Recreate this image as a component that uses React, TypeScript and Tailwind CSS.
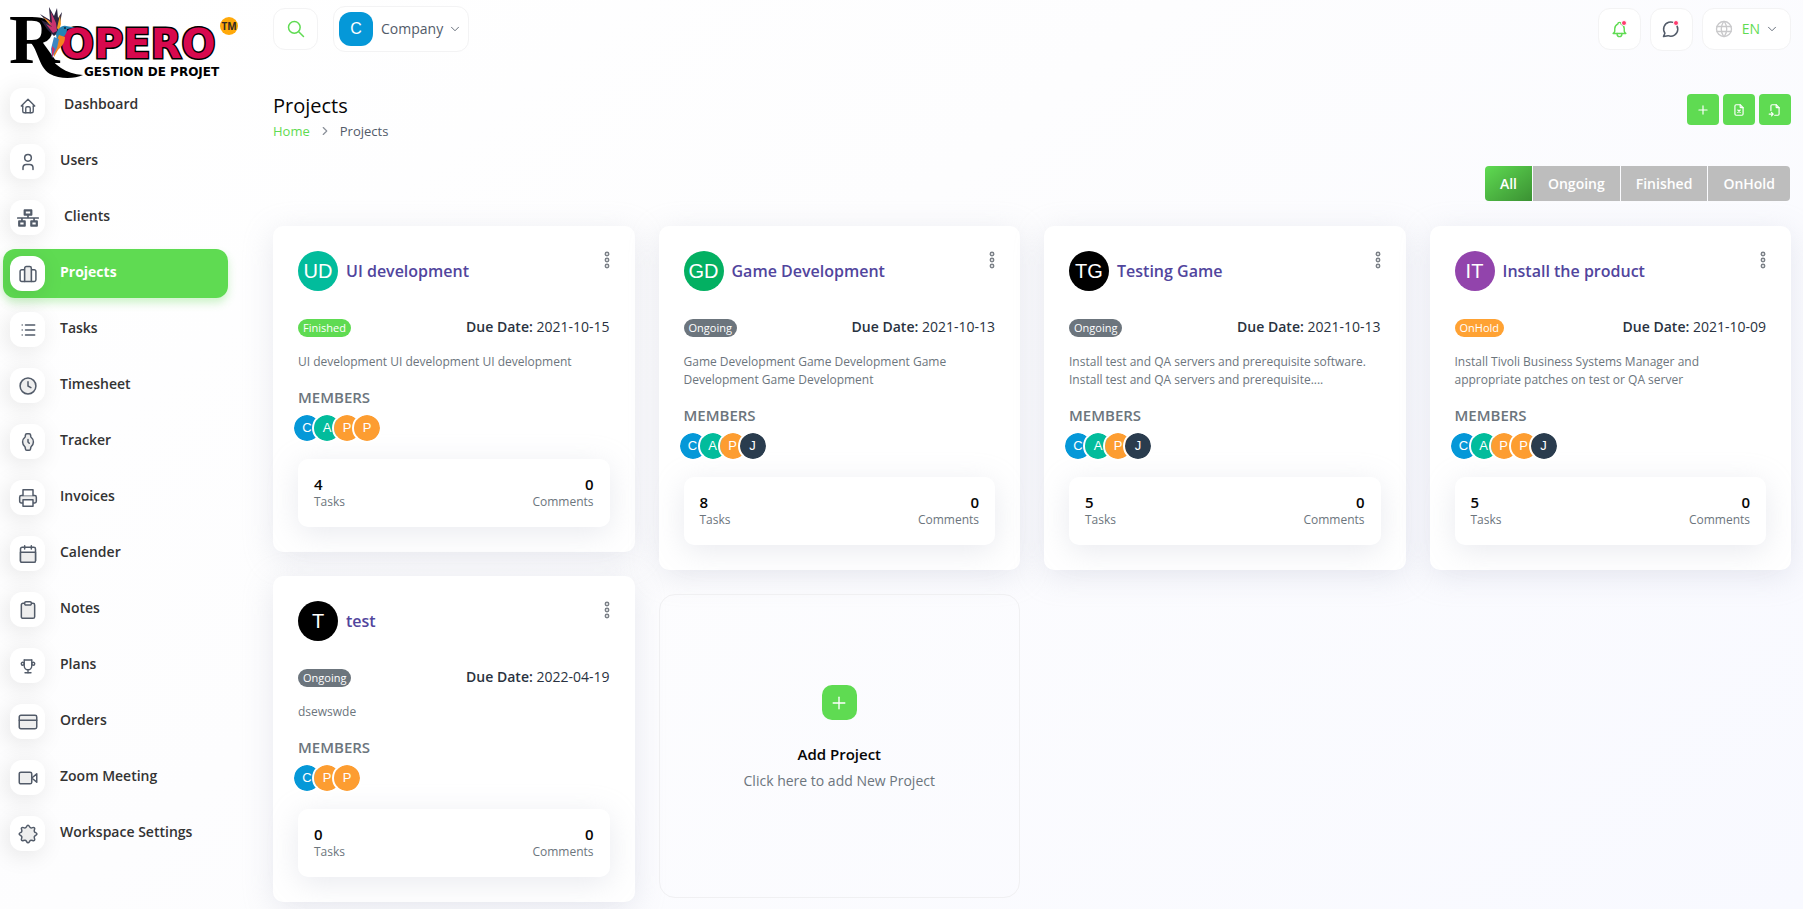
import type { ReactNode } from "react";
import { FaNetworkWired } from "react-icons/fa";
import {
  TbBell,
  TbChevronDown,
  TbChevronRight,
  TbFileImport,
  TbFileX,
  TbHome,
  TbList,
  TbPlus,
  TbSearch,
  TbTrophy,
  TbUser,
  TbWorld,
} from "react-icons/tb";

type Status = "Finished" | "Ongoing" | "OnHold";
type Member = "C" | "A" | "P" | "J";

interface Project {
  name: string;
  initials: string;
  avatarClass: string;
  status: Status;
  dueDate: string;
  description: string;
  members: Member[];
  tasks: number;
  comments: number;
}

const STATUS_CLASS: Record<Status, string> = {
  Finished: "bg-[#5fdb52]",
  Ongoing: "bg-[#6c757d]",
  OnHold: "bg-[#ffa233]",
};

const MEMBER_CLASS: Record<Member, string> = {
  C: "bg-[#0598d8]",
  A: "bg-[#02bc9c]",
  P: "bg-[#fd9d31]",
  J: "bg-[#2a3c4e]",
};

// One entry per column: cards of unequal height are packed top-down.
const COLUMNS: Project[][] = [
  [
    {
      name: "UI development",
      initials: "UD",
      avatarClass: "bg-[#02bc9c]",
      status: "Finished",
      dueDate: "2021-10-15",
      description: "UI development UI development UI development",
      members: ["C", "A", "P", "P"],
      tasks: 4,
      comments: 0,
    },
    {
      name: "test",
      initials: "T",
      avatarClass: "bg-black",
      status: "Ongoing",
      dueDate: "2022-04-19",
      description: "dsewswde",
      members: ["C", "P", "P"],
      tasks: 0,
      comments: 0,
    },
  ],
  [
    {
      name: "Game Development",
      initials: "GD",
      avatarClass: "bg-[#03b062]",
      status: "Ongoing",
      dueDate: "2021-10-13",
      description: "Game Development Game Development Game Development Game Development",
      members: ["C", "A", "P", "J"],
      tasks: 8,
      comments: 0,
    },
  ],
  [
    {
      name: "Testing Game",
      initials: "TG",
      avatarClass: "bg-black",
      status: "Ongoing",
      dueDate: "2021-10-13",
      description:
        "Install test and QA servers and prerequisite software. Install test and QA servers and prerequisite....",
      members: ["C", "A", "P", "J"],
      tasks: 5,
      comments: 0,
    },
  ],
  [
    {
      name: "Install the product",
      initials: "IT",
      avatarClass: "bg-[#9244ac]",
      status: "OnHold",
      dueDate: "2021-10-09",
      description:
        "Install Tivoli Business Systems Manager and appropriate patches on test or QA server",
      members: ["C", "A", "P", "P", "J"],
      tasks: 5,
      comments: 0,
    },
  ],
];

function DuoIcon({ children }: { children: ReactNode }) {
  return (
    <svg
      viewBox="0 0 24 24"
      className="size-5"
      fill="none"
      stroke="currentColor"
      strokeWidth="1.8"
      strokeLinecap="round"
      strokeLinejoin="round"
      aria-hidden="true"
    >
      {children}
    </svg>
  );
}

const NAV_ITEMS: { label: string; icon: ReactNode; wide?: boolean }[] = [
  { label: "Dashboard", icon: <TbHome size={18} strokeWidth={1.8} />, wide: true },
  { label: "Users", icon: <TbUser size={20} strokeWidth={1.8} /> },
  { label: "Clients", icon: <FaNetworkWired size={22} />, wide: true },
  {
    label: "Projects",
    icon: (
      <DuoIcon>
        <path d="M8 21H4.500a2 2 0 0 1-2-2V9a2 2 0 0 1 2-2H8zM16 21h3.500a2 2 0 0 0 2-2V9a2 2 0 0 0-2-2H16z" />
        <path d="M8 21V5a2 2 0 0 1 2-2h4a2 2 0 0 1 2 2v16z" fill="#eeeeee" />
      </DuoIcon>
    ),
  },
  { label: "Tasks", icon: <TbList size={20} strokeWidth={1.8} /> },
  {
    label: "Timesheet",
    icon: (
      <DuoIcon>
        <circle cx="12" cy="12" r="9.500" fill="#eeeeee" />
        <path d="M12 7v5l3.500 2" />
      </DuoIcon>
    ),
  },
  {
    label: "Tracker",
    icon: (
      <DuoIcon>
        <path
          d="M8.500 6 9 3.500A1.500 1.500 0 0 1 10.500 2h3A1.500 1.500 0 0 1 15 3.500l.5 2.500Q18.500 8.500 18.500 12t-3 6l-.5 2.500a1.500 1.500 0 0 1-1.500 1.500h-3A1.500 1.500 0 0 1 9 20.500L8.500 18q-3-2.500-3-6t3-6z"
          fill="#eeeeee"
        />
        <path d="M12 9v3l1.500 1.500" />
      </DuoIcon>
    ),
  },
  {
    label: "Invoices",
    icon: (
      <DuoIcon>
        <path d="M6 18H4a2 2 0 0 1-2-2v-5a2 2 0 0 1 2-2h16a2 2 0 0 1 2 2v5a2 2 0 0 1-2 2h-2" fill="#eeeeee" />
        <path d="M6 9V2h12v7" fill="#ffffff" />
        <path d="M6 14h12v8H6z" fill="#ffffff" />
      </DuoIcon>
    ),
  },
  {
    label: "Calender",
    icon: (
      <DuoIcon>
        <rect x="3" y="4" width="18" height="18" rx="2" />
        <path d="M3 10h18v10a2 2 0 0 1-2 2H5a2 2 0 0 1-2-2zM16 2v4M8 2v4" fill="#eeeeee" />
      </DuoIcon>
    ),
  },
  {
    label: "Notes",
    icon: (
      <DuoIcon>
        <rect x="4" y="4" width="16" height="18" rx="2" fill="#eeeeee" />
        <rect x="8" y="2" width="8" height="4" rx="1.500" fill="#ffffff" />
      </DuoIcon>
    ),
  },
  { label: "Plans", icon: <TbTrophy size={18} strokeWidth={1.8} /> },
  {
    label: "Orders",
    icon: (
      <DuoIcon>
        <rect x="1.500" y="4" width="21" height="16" rx="2" fill="#eeeeee" />
        <path d="M1.500 10h21" />
      </DuoIcon>
    ),
  },
  {
    label: "Zoom Meeting",
    icon: (
      <DuoIcon>
        <rect x="1.500" y="5" width="15" height="14" rx="2" fill="#eeeeee" />
        <path d="m22.500 7-6 5 6 5z" />
      </DuoIcon>
    ),
  },
  {
    label: "Workspace Settings",
    icon: (
      <DuoIcon>
        <path
          d="M12 1.500c1.800 0 1.600 2.600 3.300 3.100 1.600.7 3.200-1.400 4.400-.1 1.300 1.200-.8 2.800-.1 4.400.5 1.700 3.100 1.400 3.100 3.100s-2.600 1.500-3.100 3.200c-.7 1.600 1.400 3.200.1 4.400-1.200 1.300-2.800-.8-4.400-.1-1.700.5-1.500 3.100-3.300 3.100s-1.500-2.600-3.200-3.100c-1.600-.7-3.200 1.400-4.400.1-1.300-1.200.8-2.800.1-4.400C4 13.500 1.400 13.700 1.400 12s2.600-1.400 3.100-3.100c.7-1.600-1.400-3.200-.1-4.400 1.200-1.300 2.800.8 4.400.1C10.500 4.100 10.200 1.500 12 1.500z"
          fill="#eeeeee"
        />
      </DuoIcon>
    ),
  },
];

function Logo() {
  return (
    <svg viewBox="0 0 250 81" className="h-[81px] w-[250px]" role="img" aria-label="Ropero gestion de projet">
      <text x="9" y="63" fontFamily="'Liberation Serif', serif" fontSize="70" fontWeight="700">
        R
      </text>
      <path d="M28 40c7 1 11 5 17 12 10 13 20 22 38 23-9 4-24 4-33-1-12-7-12-27-22-34z" />
      <text
        x="60"
        y="58"
        fontFamily="'DejaVu Sans', sans-serif"
        fontSize="40"
        fontWeight="700"
        fill="#d8094e"
        stroke="#000000"
        strokeWidth="3"
        paintOrder="stroke"
      >
        OPERO
      </text>
      <text x="84" y="76" fontFamily="'DejaVu Sans', sans-serif" fontSize="12" fontWeight="700">
        GESTION DE PROJET
      </text>
      {/* hummingbird */}
      <path d="M54 36 47 29l-6-9 7 3-8-9 10 6L49 7l5 9 3-8 1 10 4-6-2 12-1 8z" fill="#2b2440" />
      <path d="m53 33-7-9 6 3-7-9 7 5-1-11 5 11 1 8z" fill="#c8336f" />
      <path d="m43 17 6 4 2 5z" fill="#f19a25" />
      <path d="m57 28 3-13 1 9-2 7z" fill="#f19a25" />
      <path d="M56 34c2-5 5-9 10-8l9 1.500-8 1.500c0 6-5 10-10 13z" fill="#2584b5" />
      <path d="m59 35 6 2c0 6-3 9-7 13l-4 7-1-7z" fill="#f5821f" />
      <path d="m54 37 5 2-2 9-5 10-1-9z" fill="#3c86c4" />
      <path d="m52 46 3 3-3 9z" fill="#c8336f" />
      <circle cx="65" cy="28" r="1" fill="#10243a" />
      <circle cx="229" cy="26" r="9" fill="#ffa90a" />
      <text x="229" y="30" textAnchor="middle" fontFamily="'Open Sans', sans-serif" fontSize="10" fontWeight="700" fill="#332a22">
        TM
      </text>
    </svg>
  );
}

function Sidebar() {
  return (
    <aside className="w-[250px] shrink-0">
      <Logo />
      <nav className="flex flex-col gap-[7px] pr-[22px] pl-[3px]">
        {NAV_ITEMS.map(({ label, icon, wide }) => {
          const active = label === "Projects";
          return (
            <a
              key={label}
              href="#"
              className={[
                "flex h-[49px] items-center rounded-xl pl-[7px] text-sm",
                active
                  ? "bg-[#5fdb52] font-bold text-white shadow-[0_5px_8px_rgba(95,219,82,0.3)]"
                  : "font-semibold text-[#333333]",
              ].join(" ")}
            >
              <span className="flex size-[35px] items-center justify-center rounded-xl bg-white text-[#525b69] shadow-[-3px_4px_23px_rgba(0,0,0,0.1)]">
                {icon}
              </span>
              <span className={wide ? "ml-[19px] pb-1" : "ml-[15px] pb-1"}>{label}</span>
            </a>
          );
        })}
      </nav>
    </aside>
  );
}

function TopBar() {
  const box = "flex items-center rounded-xl border border-[#f3f3f4] bg-white";
  return (
    <header className="flex h-[58px] items-center justify-between">
      <div className="flex items-center gap-[15px]">
        <button type="button" aria-label="Search" className={`${box} h-[42px] w-[45px] justify-center text-[#5fdb52]`}>
          <TbSearch size={20} strokeWidth={1.8} />
        </button>
        <button type="button" className={`${box} h-[46px] pr-[6px] pl-[5px] text-sm font-medium text-[#525b69]`}>
          <span className="mr-2 flex size-[34px] items-center justify-center rounded-xl bg-[#0598d8] font-['Liberation_Sans',sans-serif] text-base font-normal text-white">
            C
          </span>
          Company
          <TbChevronDown size={14} strokeWidth={1.5} className="ml-[5px]" />
        </button>
      </div>
      <div className="flex items-center gap-[9px]">
        <button type="button" aria-label="Notifications" className={`${box} relative h-[42px] w-[43px] justify-center text-[#5fdb52]`}>
          <TbBell size={19} strokeWidth={1.8} />
          <span className="absolute top-[11px] right-[13px] size-[6px] rounded-full border border-white bg-[#ff3a6e]" />
        </button>
        <button type="button" aria-label="Messages" className={`${box} relative h-[43px] w-[43px] justify-center text-[#525b69]`}>
          <DuoIcon>
            <path d="M3 21l1.700-4A8.500 8.500 0 1 1 8.500 20z" />
          </DuoIcon>
          <span className="absolute top-[11px] right-[13px] size-[6px] rounded-full border border-white bg-[#ff3a6e]" />
        </button>
        <button type="button" className={`${box} h-[42px] px-[11px] text-sm text-[#5fdb52]`}>
          <TbWorld size={20} strokeWidth={1.6} className="mr-2 text-[#c9c9cb]" />
          EN
          <TbChevronDown size={14} strokeWidth={1.5} className="ml-[5px] text-[#525b69]" />
        </button>
      </div>
    </header>
  );
}

function PageHeader() {
  const action = "flex h-[31px] w-8 items-center justify-center rounded bg-[#5fdb52] text-white";
  return (
    <div className="mt-[33px] flex items-start justify-between">
      <div>
        <h1 className="text-xl leading-[30px] font-medium text-[#060606]">Projects</h1>
        <nav aria-label="Breadcrumb" className="flex items-center text-[13px] leading-5 text-[#525b69]">
          <a href="#" className="text-[#5fdb52]">
            Home
          </a>
          <TbChevronRight size={14} className="mx-2 text-[#8a9099]" />
          <span>Projects</span>
        </nav>
      </div>
      <div className="mt-[3px] flex gap-1">
        <button type="button" aria-label="Add project" className={action}>
          <TbPlus size={14} />
        </button>
        <button type="button" aria-label="Export" className={action}>
          <TbFileX size={14} />
        </button>
        <button type="button" aria-label="Import" className={action}>
          <TbFileImport size={14} />
        </button>
      </div>
    </div>
  );
}

function Filters() {
  return (
    <div className="mt-[25px] flex justify-end pr-px">
      <div className="flex gap-px overflow-hidden rounded text-sm font-semibold text-white">
        <button type="button" className="h-[35px] bg-linear-to-br from-[#5fdb52] to-[#3b9133] px-[15px]">
          All
        </button>
        {["Ongoing", "Finished", "OnHold"].map((label) => (
          <button key={label} type="button" className="h-[35px] bg-[#bdbdbd] px-[15px]">
            {label}
          </button>
        ))}
      </div>
    </div>
  );
}

function ProjectCard({ project }: { project: Project }) {
  return (
    <article className="rounded-[10px] bg-white p-[25px] shadow-[0_6px_30px_rgba(182,186,203,0.3)]">
      <header className="flex items-start justify-between">
        <div className="flex items-center gap-2">
          <span
            className={`flex size-10 items-center justify-center rounded-full font-['Liberation_Sans',sans-serif] text-xl text-white ${project.avatarClass}`}
          >
            {project.initials}
          </span>
          <h2 className="text-base font-semibold text-[#51459d]">
            <a href="#">{project.name}</a>
          </h2>
        </div>
        <button type="button" aria-label="Project menu" className="text-[#7b8087]">
          <svg viewBox="0 0 6 18" className="h-[18px] w-[6px]" fill="none" stroke="currentColor" strokeWidth="1.500">
            <circle cx="3" cy="3" r="1.700" />
            <circle cx="3" cy="9" r="1.700" />
            <circle cx="3" cy="15" r="1.700" />
          </svg>
        </button>
      </header>

      <div className="mt-[25px] flex h-[22px] items-center justify-between">
        <span
          className={`mt-[2px] rounded-full px-[5px] text-[11px] leading-[18px] text-white ${STATUS_CLASS[project.status]}`}
        >
          {project.status}
        </span>
        <p className="text-sm text-[#293240]">
          <strong className="font-semibold">Due Date:</strong> {project.dueDate}
        </p>
      </div>

      <p className="mt-[15px] text-xs leading-[18px] text-[#6c757d]">{project.description}</p>

      <h3 className="mt-4 text-[15px] leading-5 font-semibold text-[#6c757d]">MEMBERS</h3>
      <div className="mt-[6px] -ml-[6px] flex">
        {project.members.map((member, index) => (
          <span
            key={index}
            className={`-mr-[10px] flex size-[30px] items-center justify-center rounded-full border-2 border-white bg-clip-padding font-['Liberation_Sans',sans-serif] text-[13px] text-white ${MEMBER_CLASS[member]}`}
          >
            {member}
          </span>
        ))}
      </div>

      <div className="mt-4 flex justify-between rounded-[10px] bg-white px-4 pt-[15px] pb-[17px] shadow-[0_6px_30px_rgba(182,186,203,0.3)]">
        <div>
          <p className="text-[15px] leading-5 font-semibold text-[#060606]">{project.tasks}</p>
          <p className="text-xs text-[#6c757d]">Tasks</p>
        </div>
        <div className="text-right">
          <p className="text-[15px] leading-5 font-semibold text-[#060606]">{project.comments}</p>
          <p className="text-xs text-[#6c757d]">Comments</p>
        </div>
      </div>
    </article>
  );
}

function AddProjectCard() {
  return (
    <button
      type="button"
      className="flex h-[304px] flex-col items-center justify-center rounded-2xl border border-[#f0f0f2] pb-4"
    >
      <span className="flex size-[35px] items-center justify-center rounded-[10px] bg-[#5fdb52] text-white">
        <TbPlus size={20} strokeWidth={1.6} />
      </span>
      <span className="mt-6 text-[15px] leading-5 font-semibold text-[#060606]">Add Project</span>
      <span className="mt-[7px] text-sm text-[#6c757d]">Click here to add New Project</span>
    </button>
  );
}

export default function App() {
  return (
    <div className="flex min-h-screen overflow-hidden bg-[linear-gradient(141deg,#ffffff_3%,#fdfdfe_40%,#f8f9ff_100%)] font-['Open_Sans',sans-serif]">
      <Sidebar />
      <main className="min-w-0 flex-1 pr-3 pl-[23px]">
        <TopBar />
        <PageHeader />
        <Filters />
        <section className="mt-[25px] grid grid-cols-4 items-start gap-6">
          {COLUMNS.map((projects, index) => (
            <div key={index} className="flex flex-col gap-6">
              {projects.map((project) => (
                <ProjectCard key={project.name} project={project} />
              ))}
              {index === 1 && <AddProjectCard />}
            </div>
          ))}
        </section>
      </main>
    </div>
  );
}
